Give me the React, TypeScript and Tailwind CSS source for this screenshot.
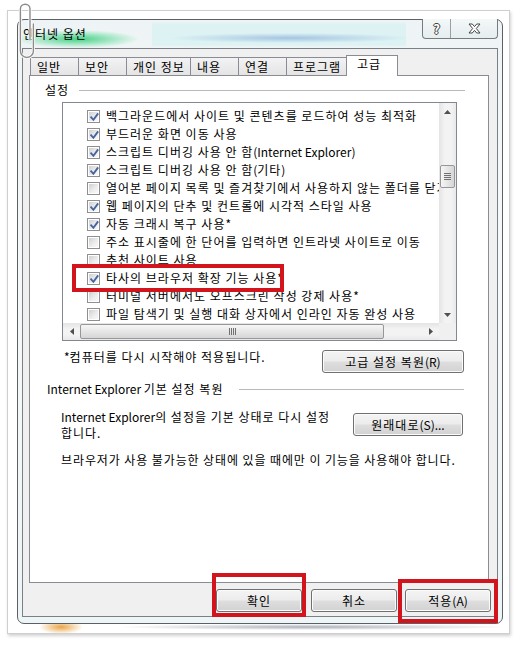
import React from 'react';

const FONT = "font-['Noto_Sans_CJK_KR','Noto_Sans',sans-serif]";

type Item = { label: React.ReactNode; key: string; checked: boolean };

// Latin runs keep normal tracking, Hangul gets +1px to match Malgun Gothic widths
const L = ({ children }: { children: React.ReactNode }) => <span className="tracking-normal">{children}</span>;

const ITEMS: Item[] = [
  { key: 'bg', label: '백그라운드에서 사이트 및 콘텐츠를 로드하여 성능 최적화', checked: true },
  { key: 'smooth', label: '부드러운 화면 이동 사용', checked: true },
  { key: 'dbg-ie', label: <>스크립트 디버깅 사용 안 함<L>(Internet Explorer)</L></>, checked: true },
  { key: 'dbg-etc', label: <>스크립트 디버깅 사용 안 함<L>(</L>기타<L>)</L></>, checked: true },
  { key: 'close', label: '열어본 페이지 목록 및 즐겨찾기에서 사용하지 않는 폴더를 닫기', checked: false },
  { key: 'visual', label: '웹 페이지의 단추 및 컨트롤에 시각적 스타일 사용', checked: true },
  { key: 'crash', label: <>자동 크래시 복구 사용<L>*</L></>, checked: true },
  { key: 'intranet', label: '주소 표시줄에 한 단어를 입력하면 인트라넷 사이트로 이동', checked: false },
  { key: 'suggest', label: '추천 사이트 사용', checked: false },
  { key: 'ext', label: <>타사의 브라우저 확장 기능 사용<L>*</L></>, checked: true },
  { key: 'term', label: <>터미널 서버에서도 오프스크린 작성 강제 사용<L>*</L></>, checked: false },
  { key: 'auto', label: '파일 탐색기 및 실행 대화 상자에서 인라인 자동 완성 사용', checked: false },
];

const TABS = [
  { label: '일반', w: 'w-[49px]' },
  { label: '보안', w: 'w-[49px]' },
  { label: '개인 정보', w: 'w-[65px]' },
  { label: '내용', w: 'w-[49px]' },
  { label: '연결', w: 'w-[49px]' },
  { label: '프로그램', w: 'w-[63px]' },
];

const BUTTON =
  'flex items-center justify-center rounded-[3px] border border-[#707070] bg-[linear-gradient(to_bottom,#f4f4f4_0%,#ececec_48%,#dedede_52%,#d2d2d2_100%)] shadow-[inset_0_0_0_1px_#fbfbfb] text-black';

function CheckBox({ checked }: { checked: boolean }) {
  return (
    <span className="relative flex h-[13px] w-[13px] shrink-0 border border-[#8f8f8f] bg-white p-px">
      <span className="h-full w-full bg-[linear-gradient(135deg,#cdd0d4,#eeeeee_60%,#f8f8f8)]" />
      {checked && (
        <svg className="absolute left-0 top-0" width="13" height="13" viewBox="0 0 13 13">
          <path d="M3.2 6.4 L5.4 8.8 L9.6 3.2" fill="none" stroke="#4a64a0" strokeWidth="1.9" strokeLinecap="square" />
        </svg>
      )}
    </span>
  );
}

function Arrow({ dir }: { dir: 'up' | 'down' | 'left' | 'right' }) {
  const pts = {
    up: '0,4 3.5,0 7,4',
    down: '0,0 7,0 3.5,4',
    left: '4,0 4,7 0,3.5',
    right: '0,0 4,3.5 0,7',
  }[dir];
  const vertical = dir === 'up' || dir === 'down';
  return (
    <svg width={vertical ? 7 : 4} height={vertical ? 4 : 7} viewBox={vertical ? '0 0 7 4' : '0 0 4 7'}>
      <polygon points={pts} fill="#505050" />
    </svg>
  );
}

function SettingsList() {
  return (
    <div className="ml-[32px] mt-[4px] flex h-[239px] w-[395px] flex-col border border-[#828790] bg-white">
      <div className="flex h-[220px]">
        <div className="w-[376px] overflow-hidden pt-[4px]">
          {ITEMS.map((item) => (
            <div key={item.key} className="flex h-[18px] items-center pl-[24px]">
              <CheckBox checked={item.checked} />
              <span className="ml-[6px] whitespace-nowrap">{item.label}</span>
            </div>
          ))}
        </div>
        {/* vertical scrollbar */}
        <div className="flex w-[17px] flex-col bg-[linear-gradient(to_right,#e4e4e4,#f3f3f3_35%,#f3f3f3_70%,#e9e9e9)]">
          <div className="flex h-[17px] items-center justify-center">
            <Arrow dir="up" />
          </div>
          <div className="flex-1 px-px pt-[45px]">
            <div className="flex h-[23px] flex-col items-center justify-center gap-[1px] rounded-[2px] border border-[#979797] bg-[linear-gradient(to_right,#f6f6f6,#e6e6e6_50%,#d6d6d6)]">
              <span className="h-px w-[7px] bg-[#707070]" />
              <span className="h-px w-[7px] bg-[#707070]" />
              <span className="h-px w-[7px] bg-[#707070]" />
              <span className="h-px w-[7px] bg-[#707070]" />
            </div>
          </div>
          <div className="flex h-[17px] items-center justify-center">
            <Arrow dir="down" />
          </div>
        </div>
      </div>
      <div className="flex h-[17px]">
        {/* horizontal scrollbar */}
        <div className="flex w-[376px] bg-[linear-gradient(to_bottom,#e4e4e4,#f3f3f3_35%,#f3f3f3_70%,#e9e9e9)]">
          <div className="flex w-[17px] items-center justify-center">
            <Arrow dir="left" />
          </div>
          <div className="py-px">
            <div className="flex h-[15px] w-[304px] items-center justify-center gap-[1px] rounded-[2px] border border-[#979797] bg-[linear-gradient(to_bottom,#f6f6f6,#e6e6e6_50%,#d6d6d6)]">
              <span className="h-[7px] w-px bg-[#707070]" />
              <span className="h-[7px] w-px bg-[#707070]" />
              <span className="h-[7px] w-px bg-[#707070]" />
              <span className="h-[7px] w-px bg-[#707070]" />
            </div>
          </div>
          <div className="flex-1" />
          <div className="flex w-[17px] items-center justify-center">
            <Arrow dir="right" />
          </div>
        </div>
        <div className="w-[17px] bg-[#f0f0f0]" />
      </div>
    </div>
  );
}

function TitleButtons() {
  return (
    <div className="-mt-px flex h-[20px] w-[76px] overflow-hidden rounded-b-[4px] border-x border-b border-[#767b80] bg-[linear-gradient(to_bottom,#f3f7f8,#e6eef0)]">
      <div className="flex w-[28px] items-center justify-center border-r border-[#9a9fa4] text-[13px] font-bold leading-none tracking-normal text-white [text-shadow:1px_0_#3f3f3f,-1px_0_#3f3f3f,0_1px_#3f3f3f,0_-1px_#3f3f3f]">
        ?
      </div>
      <div className="flex flex-1 items-center justify-center">
        <svg width="13" height="11" viewBox="0 0 13 11">
          <polygon
            points="1,1 4.3,1 6.5,3.6 8.7,1 12,1 8.3,5.5 12,10 8.7,10 6.5,7.4 4.3,10 1,10 4.7,5.5"
            fill="#ffffff"
            stroke="#454545"
            strokeWidth="1"
            strokeLinejoin="round"
          />
        </svg>
      </div>
    </div>
  );
}

function Dialog() {
  return (
    <div className="flex h-[605px] w-[486px] flex-col rounded-[7px] border border-[#5d6166] bg-[linear-gradient(to_bottom,#eef4f5,#f6f9f9_40%,#eef5f6)] px-[4px]">
      {/* title bar, glass shows a blurred page behind it */}
      <div className="flex h-[28px] items-start justify-between bg-[radial-gradient(ellipse_62px_9px_at_55px_19px,rgba(50,205,120,0.9),rgba(90,220,150,0.35)_70%,transparent),radial-gradient(ellipse_120px_5px_at_268px_18px,rgba(95,140,205,0.45),transparent),linear-gradient(to_bottom,transparent_2px,#dcf2f3_4px,#dcf2f3_25px,transparent_27px)] bg-[length:100%_100%,100%_100%,254px_100%] bg-[position:0_0,0_0,130px_0] bg-no-repeat">
        <div className="pl-[1px] pt-[6px]">인터넷 옵션</div>
        <TitleButtons />
      </div>

      {/* client area */}
      <div className="flex h-[569px] flex-col border border-[#7b8087] bg-[#f0f0f0]">
        <div className="pl-[6px] pr-[8px] pt-[6px]">
          <div className="flex h-[20px] items-end pl-[1px]">
            {TABS.map((t, i) => (
              <div
                key={t.label}
                className={`flex h-[18px] items-center border-x border-t border-[#898c95] bg-[linear-gradient(to_bottom,#f3f3f3,#e4e4e4)] pl-[6px] leading-[16px] ${t.w} ${i > 0 ? '-ml-px' : ''}`}
              >
                {t.label}
              </div>
            ))}
            <div className="relative z-10 -mb-px -ml-[3px] h-[21px] w-[52px] border-x border-t border-[#898c95] bg-white pl-[10px] leading-[16px]">
              고급
            </div>
          </div>

          <div className="h-[508px] border border-[#898c95] bg-white">
            {/* 설정 group */}
            <div className="flex items-center pl-[15px] pr-[23px] pt-[6px]">
              <span>설정</span>
              <span className="ml-[10px] h-px flex-1 bg-[#b9b9b9]" />
            </div>

            <SettingsList />

            <div className="mt-[9px] flex items-start justify-between pl-[34px] pr-[24px]">
              <span className="-mt-px">
                <L>*</L>컴퓨터를 다시 시작해야 적용됩니다.
              </span>
              <button className={`${BUTTON} h-[23px] w-[142px]`}>
                고급 설정 복원<L>(R)</L>
              </button>
            </div>

            <div className="mt-[8px] flex items-center pl-[17px] pr-[24px]">
              <span>
                <L>Internet Explorer </L>기본 설정 복원
              </span>
              <span className="ml-[16px] h-px flex-1 bg-[#b9b9b9]" />
            </div>

            <div className="mt-[12px] flex items-start justify-between pl-[31px] pr-[25px]">
              <p>
                <L>Internet Explorer</L>의 설정을 기본 상태로 다시 설정
                <br />
                합니다.
              </p>
              <button className={`${BUTTON} mt-[4px] h-[23px] w-[110px]`}>
                원래대로<L>(S)...</L>
              </button>
            </div>

            <p className="mt-[11px] pl-[31px] tracking-[0.9px]">
              브라우저가 사용 불가능한 상태에 있을 때에만 이 기능을 사용해야 합니다.
            </p>
          </div>
        </div>

        {/* dialog buttons */}
        <div className="mt-[6px] flex justify-end pr-[6px]">
          <button className={`${BUTTON} h-[23px] w-[86px]`}>확인</button>
          <button className={`${BUTTON} ml-[9px] h-[23px] w-[86px]`}>취소</button>
          <button className={`${BUTTON} ml-[8px] h-[23px] w-[86px]`}>
            적용<L>(A)</L>
          </button>
        </div>
      </div>
    </div>
  );
}

function Paperclip() {
  return (
    <svg className="absolute left-[16px] top-0" width="22" height="60" viewBox="0 0 22 60">
      <path
        d="M14 40 V9 A4.8 4.8 0 0 0 4.4 9 V51 A6.5 6.5 0 0 0 17.4 51 V24"
        fill="none"
        stroke="#ffffff"
        strokeWidth="3"
        strokeLinecap="round"
      />
      <path
        d="M14 40 V9 A4.8 4.8 0 0 0 4.4 9 V51 A6.5 6.5 0 0 0 17.4 51 V24"
        fill="none"
        stroke="#8c8c8c"
        strokeWidth="1.4"
        strokeLinecap="round"
      />
    </svg>
  );
}

export default function App() {
  return (
    <div className={`relative h-[645px] w-[519px] overflow-hidden bg-white pl-[7px] pt-[10px] text-[12px] leading-[16px] tracking-[1px] text-black ${FONT}`}>
      <div className="w-[503px] border border-[#cfcfcf] bg-white pl-[9px] pr-[6px] pt-[8px] shadow-[1px_2px_3px_rgba(0,0,0,0.18)]">
        <Dialog />
        <div className="h-[9px] bg-[radial-gradient(ellipse_22px_7px_at_44px_3px,rgba(230,150,40,0.85),transparent),radial-gradient(ellipse_195px_3px_at_295px_3px,rgba(50,60,85,0.4),transparent)]" />
      </div>

      <Paperclip />

      {/* red highlight boxes */}
      <div className="absolute left-[72px] top-[264px] h-[28px] w-[212px] border-[4px] border-[#d2151c]" />
      <div className="absolute left-[212px] top-[573px] h-[44px] w-[94px] border-[4px] border-[#d2151c]" />
      <div className="absolute left-[398px] top-[579px] h-[44px] w-[100px] border-[4px] border-[#d2151c]" />
    </div>
  );
}
